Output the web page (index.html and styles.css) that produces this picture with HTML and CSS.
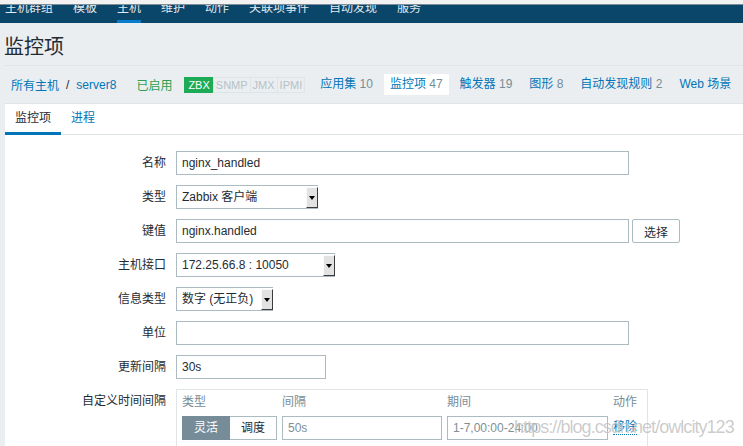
FILE: index.html
```html
<!DOCTYPE html>
<html lang="zh">
<head>
<meta charset="utf-8">
<title>监控项</title>
<link rel="stylesheet" href="styles.css">
</head>
<body>
<div class="topstrip"></div>
<nav class="topnav">
  <span class="nav-item">主机群组</span>
  <span class="nav-item">模板</span>
  <span class="nav-item active">主机</span>
  <span class="nav-item">维护</span>
  <span class="nav-item">动作</span>
  <span class="nav-item">关联项事件</span>
  <span class="nav-item">自动发现</span>
  <span class="nav-item">服务</span>
</nav>
<header class="page-header"><h1>监控项</h1></header>
<div class="hostbar">
  <a class="crumb">所有主机</a><span class="sep">/</span><a class="crumb">server8</a>
  <span class="status">已启用</span>
  <span class="badges"><span class="badge on">ZBX</span><span class="badge">SNMP</span><span class="badge">JMX</span><span class="badge">IPMI</span></span>
  <span class="hb-list">
    <a class="hb-item">应用集 <span class="num">10</span></a>
    <a class="hb-item active">监控项 <span class="num">47</span></a>
    <a class="hb-item">触发器 <span class="num">19</span></a>
    <a class="hb-item">图形 <span class="num">8</span></a>
    <a class="hb-item">自动发现规则 <span class="num">2</span></a>
    <a class="hb-item">Web 场景</a>
  </span>
</div>
<main class="content">
  <div class="tabs"><span class="tab active">监控项</span><span class="tab">进程</span></div>
  <form class="form">
    <label class="lbl">名称</label>
    <input class="input w453" type="text" value="nginx_handled">

    <label class="lbl">类型</label>
    <div class="select w142"><span class="sel-text">Zabbix 客户端</span><span class="sel-btn"></span></div>

    <label class="lbl">键值</label>
    <div class="with-btn"><input class="input w453" type="text" value="nginx.handled"><button type="button" class="btn">选择</button></div>

    <label class="lbl">主机接口</label>
    <div class="select w159"><span class="sel-text">172.25.66.8 : 10050</span><span class="sel-btn"></span></div>

    <label class="lbl">信息类型</label>
    <div class="select w97"><span class="sel-text">数字 (无正负)</span><span class="sel-btn"></span></div>

    <label class="lbl">单位</label>
    <input class="input w453" type="text" value="">

    <label class="lbl">更新间隔</label>
    <input class="input w150" type="text" value="30s">

    <label class="lbl">自定义时间间隔</label>
    <div class="intervals">
      <span class="ih">类型</span>
      <span class="ih">间隔</span>
      <span class="ih">期间</span>
      <span class="ih">动作</span>
      <span class="seg"><span class="seg-on">灵活</span><span class="seg-off">调度</span></span>
      <input class="input ph w160" type="text" value="50s">
      <input class="input ph w161" type="text" value="1-7,00:00-24:00">
      <a class="remove">移除</a>
    </div>
  </form>
</main>
<div class="watermark">https://blog.csdn.net/owlcity123</div>
</body>
</html>
```

FILE: styles.css
```css
* { box-sizing: border-box; }
html, body { margin: 0; padding: 0; }
body {
  background: #ebeef0;
  font-family: "Liberation Sans", "Noto Sans CJK SC", sans-serif;
  font-size: 12px;
  color: #1f2c33;
  width: 743px;
  height: 446px;
  overflow: hidden;
  position: relative;
}

.topstrip { height: 5px; background: #f2f2f2; border-bottom: 1px solid #7b8d97; }
.topnav {
  height: 18px;
  background: #0a466a;
  display: flex;
  gap: 20px;
  padding-left: 5px;
  overflow: hidden;
}
.nav-item {
  margin-top: -3px;
  height: 21px;
  line-height: 12px;
  color: #e3eaef;
  border-bottom: 3px solid transparent;
  white-space: nowrap;
}
.nav-item.active { border-bottom-color: #0a7ccd; }

.page-header { margin-left: 4px; height: 43px; border-bottom: 1px solid #dfe4e7; }
.page-header h1 {
  margin: 0;
  padding-top: 6px;
  font-size: 20px;
  line-height: 36px;
  font-weight: normal;
  color: #1f2c33;
}

.hostbar {
  height: 38px;
  border-bottom: 1px solid #dfe4e7;
  display: flex;
  align-items: center;
  padding-left: 7px;
  white-space: nowrap;
  margin-left: 4px;
}
.crumb { color: #0275b8; }
.sep { padding: 0 7px; color: #1f2c33; }
.status { margin-left: 20px; color: #2aa050; }
.badges { display: flex; margin-left: 12px; }
.badge {
  font-size: 11px;
  line-height: 14px;
  padding: 0 2px;
  border: 1px solid #dfe4e7;
  color: #b5c2c9;
  margin-left: -1px;
}
.badge.on { background: #1eab58; border-color: #1eab58; color: #fff; padding: 0 3px; margin-left: 0; }
.hb-list { display: flex; gap: 5px; margin-left: 9px; }
.hb-item { color: #0275b8; padding: 0 6px; line-height: 21px; }
.hb-item.active { background: #fff; }
.num { color: #768d99; }

.content { margin-left: 5px; background: #fff; height: 400px; }
.tabs { display: flex; height: 31px; border-bottom: 1px solid #dfe4e7; }
.tab {
  padding: 1px 10px 0;
  height: 31px;
  line-height: 27px;
  border-bottom: 3px solid transparent;
  color: #0275b8;
}
.tab.active { color: #1f2c33; border-bottom-color: #0275b8; }

.form {
  display: grid;
  grid-template-columns: 161px auto;
  column-gap: 10px;
  row-gap: 10px;
  padding-top: 16px;
  justify-items: start;
  align-items: start;
}
.lbl { justify-self: end; line-height: 24px; white-space: nowrap; color: #1f2c33; }
.input {
  display: block;
  height: 24px;
  margin: 0;
  border: 1px solid #acbbc2;
  border-radius: 0;
  background: #fff;
  padding: 0 5px;
  font: inherit;
  color: #1f2c33;
  outline: none;
}
.input.ph { color: #7e8f98; }
.w453 { width: 453px; }
.w150 { width: 150px; }
.w160 { width: 160px; }
.w161 { width: 161px; }
.w142 { width: 142px; }
.w159 { width: 159px; }
.w97 { width: 97px; }

.with-btn { display: flex; gap: 3px; }
.btn {
  width: 48px;
  height: 24px;
  margin: 0;
  padding: 0;
  border: 1px solid #acbbc2;
  border-radius: 2px;
  background: #fff;
  font: inherit;
  color: #1f2c33;
}

.select {
  display: flex;
  align-items: flex-start;
  height: 24px;
  border: 1px solid #acbbc2;
  border-right: none;
  background: #fff;
}
.sel-text { flex: 1; padding-left: 5px; line-height: 22px; white-space: nowrap; overflow: hidden; }
.sel-btn {
  width: 12px;
  height: 21px;
  margin-top: 1px;
  background: #e2e2e2;
  border-top: 1px solid #fafafa;
  border-left: 1px solid #fafafa;
  border-right: 1px solid #3c3c3c;
  border-bottom: 1px solid #3c3c3c;
  display: flex;
  justify-content: center;
  align-items: center;
}
.sel-btn::after {
  content: "";
  border-left: 3px solid transparent;
  border-right: 3px solid transparent;
  border-top: 4px solid #000;
}

.intervals {
  width: 472px;
  border: 1px solid #dfe4e7;
  padding: 4px 9px 12px 5px;
  display: grid;
  grid-template-columns: 95px 160px 161px auto;
  column-gap: 5px;
  row-gap: 6px;
  align-items: center;
  justify-items: start;
}
.ih { color: #768d99; line-height: 16px; }
.seg { display: flex; height: 24px; }
.seg-on, .seg-off { line-height: 22px; text-align: center; border: 1px solid #acbbc2; }
.seg-on { width: 48px; background: #768d99; border-color: #768d99; color: #fff; }
.seg-off { width: 47px; border-left: none; color: #1f2c33; background: #fff; }
.remove { color: #0275b8; border-bottom: 1px dotted #0275b8; line-height: 13px; }

.watermark {
  position: absolute;
  left: 514px;
  top: 418px;
  font-size: 18px;
  line-height: 18px;
  letter-spacing: -0.95px;
  color: rgba(140, 140, 140, 0.45);
  text-shadow: 0 0 1px rgba(255, 255, 255, 0.8);
  white-space: nowrap;
  pointer-events: none;
}
```
